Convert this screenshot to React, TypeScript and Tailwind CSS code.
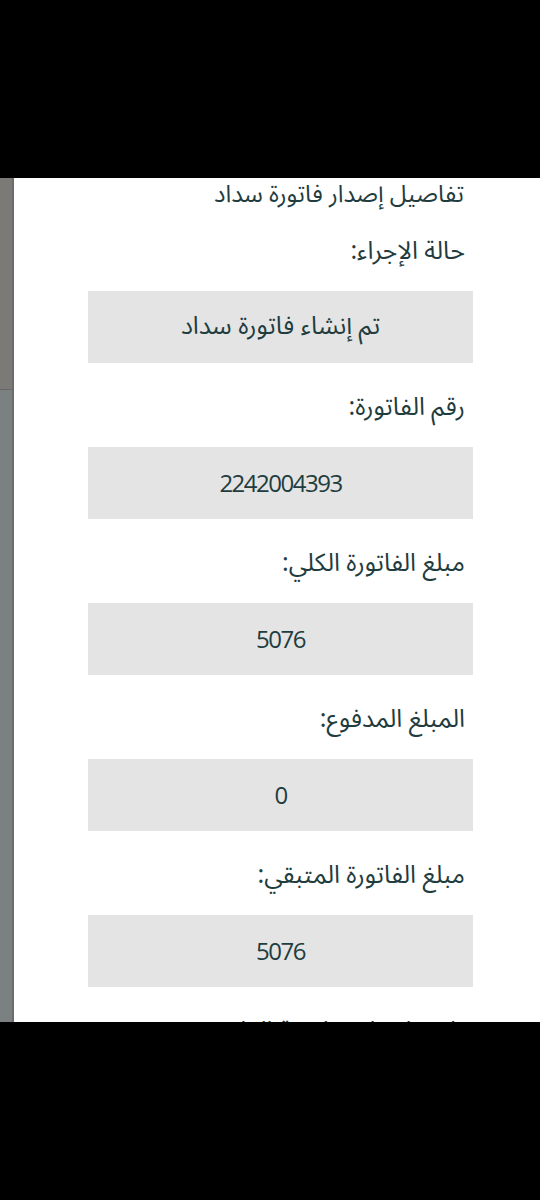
const arabic = "font-['Noto_Sans_Arabic','DejaVu_Sans',sans-serif]";

type Field = { label: string; value: string; numeric?: boolean };

const fields: Field[] = [
  { label: "حالة الإجراء:", value: "تم إنشاء فاتورة سداد" },
  { label: "رقم الفاتورة:", value: "2242004393", numeric: true },
  { label: "مبلغ الفاتورة الكلي:", value: "5076", numeric: true },
  { label: "المبلغ المدفوع:", value: "0", numeric: true },
  { label: "مبلغ الفاتورة المتبقي:", value: "5076", numeric: true },
];

function Label({ text }: { text: string }) {
  return (
    <div className={`flex h-[40px] shrink-0 items-center pr-[75px] text-[25px] text-[#1f3c3e] ${arabic}`}>
      {text}
    </div>
  );
}

function FieldBlock({ field }: { field: Field }) {
  return (
    <div className="flex shrink-0 flex-col">
      <Label text={field.label} />
      <div className="mr-[67px] mt-[19px] mb-[25px] flex h-[72px] w-[385px] shrink-0 items-center justify-center bg-[#e4e4e4]">
        {field.numeric ? (
          <span className="font-['Open_Sans',sans-serif] text-[24px] tracking-[-1.5px] text-[#1f3c3e]">
            {field.value}
          </span>
        ) : (
          <span className={`text-[25px] text-[#1f3c3e] ${arabic}`}>{field.value}</span>
        )}
      </div>
    </div>
  );
}

export default function App() {
  return (
    <div className="flex h-[1200px] w-[540px] flex-col bg-black">
      <div className="h-[178px] shrink-0" />
      <div className="flex h-[844px] shrink-0">
        <div className="flex w-[14px] shrink-0 flex-col border-r-2 border-[#6b6b69]">
          <div className="h-[212px] border-b border-[#666664] bg-[#7b7a77]" />
          <div className="flex-1 bg-[#7b8080]" />
        </div>
        <div dir="rtl" className="flex flex-1 flex-col overflow-hidden bg-white">
          <div className={`flex h-[34px] shrink-0 items-center pr-[76px] text-[24px] leading-[34px] text-[#1f3c3e] ${arabic}`}>
            تفاصيل إصدار فاتورة سداد
          </div>
          <div className="h-[20px] shrink-0" />
          {fields.map((f, i) => (
            <FieldBlock key={i} field={f} />
          ))}
          <Label text="تاريخ انتهاء صلاحية الفاتورة:" />
        </div>
      </div>
      <div className="flex-1" />
    </div>
  );
}
